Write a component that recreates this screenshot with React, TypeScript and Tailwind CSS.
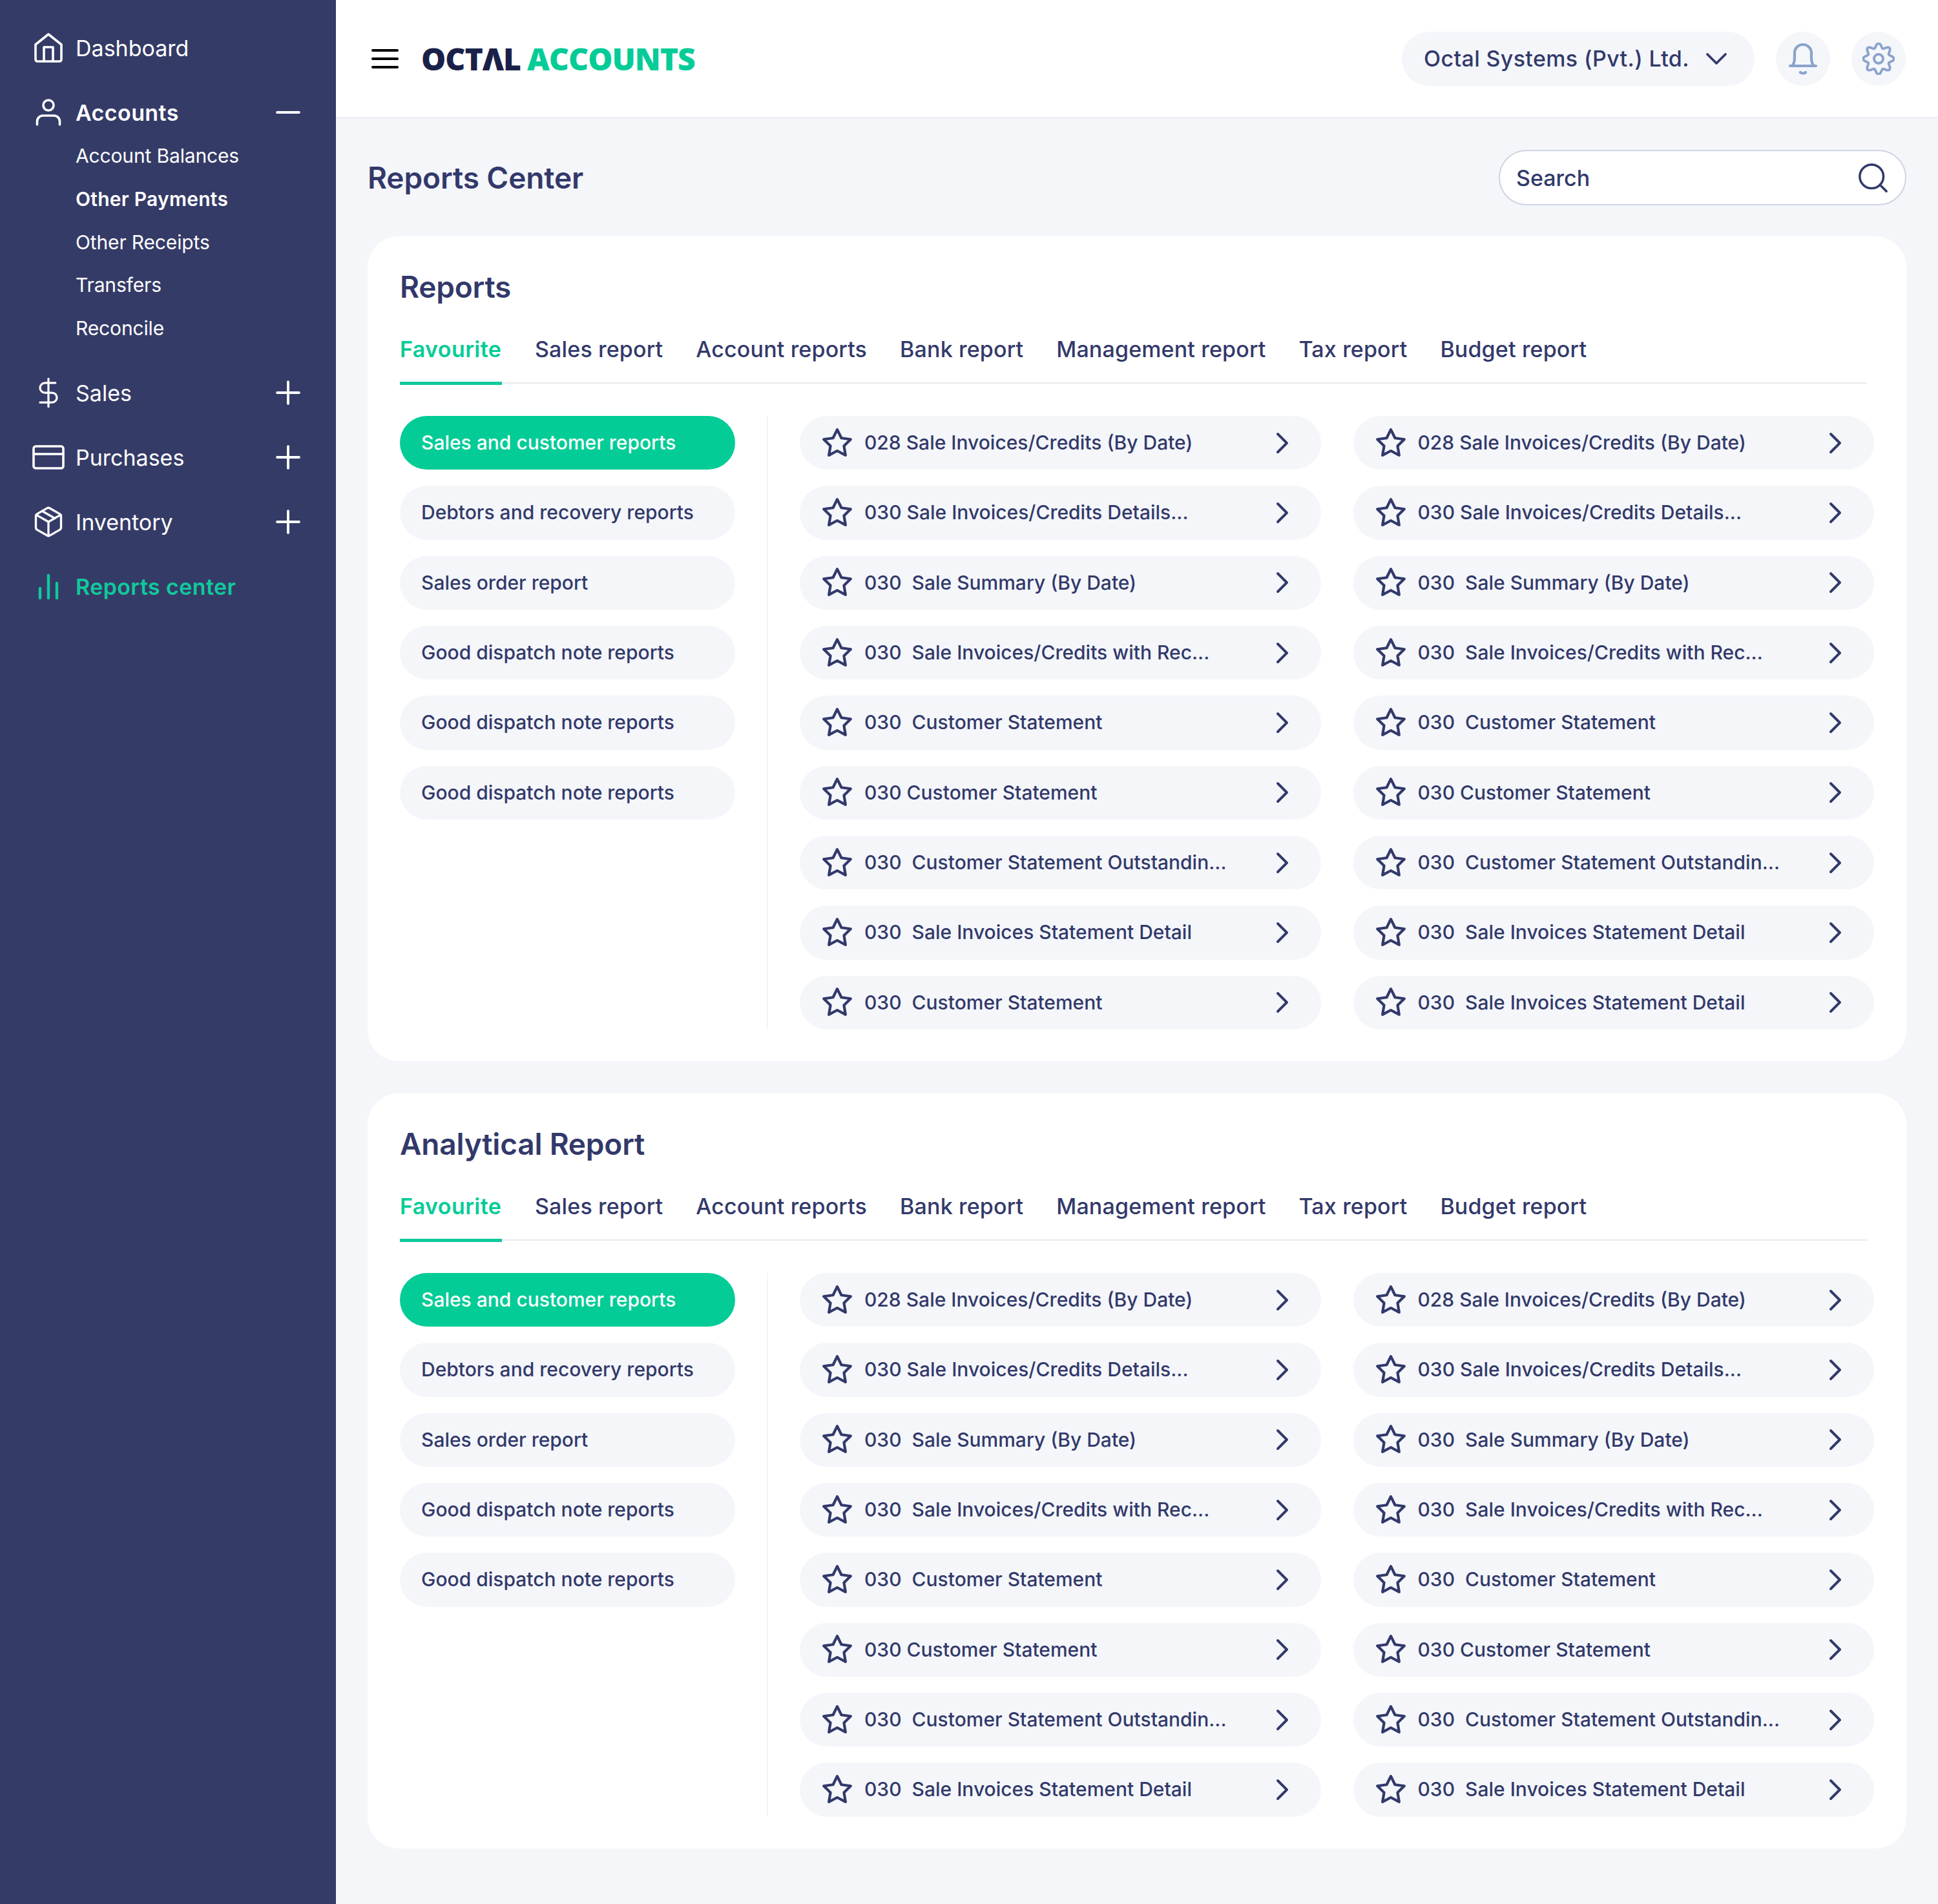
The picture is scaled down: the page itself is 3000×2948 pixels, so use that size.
import { ChevronDown, ChevronRight, DollarSign, Minus, Package, Plus, Search } from "lucide-react";
import type { ReactNode } from "react";

const TABS = ["Sales report", "Account reports", "Bank report", "Management report", "Tax report", "Budget report"];

const CATEGORIES = [
  "Sales and customer reports",
  "Debtors and recovery reports",
  "Sales order report",
  "Good dispatch note reports",
  "Good dispatch note reports",
  "Good dispatch note reports",
];

const REPORTS = [
  "028 Sale Invoices/Credits (By Date)",
  "030 Sale Invoices/Credits Details...",
  "030  Sale Summary (By Date)",
  "030  Sale Invoices/Credits with Rec...",
  "030  Customer Statement",
  "030 Customer Statement",
  "030  Customer Statement Outstandin...",
  "030  Sale Invoices Statement Detail",
];

// wavy circle, 8 lobes
const GEAR_PATH =
  Array.from({ length: 145 }, (_, i) => {
    const a = (i / 144) * Math.PI * 2;
    const r = 20.5 + 3.4 * Math.cos(8 * a);
    return `${i === 0 ? "M" : "L"}${(25 + r * Math.sin(a)).toFixed(2)} ${(25 - r * Math.cos(a)).toFixed(2)}`;
  }).join(" ") + "z";

function StarIcon() {
  return (
    <svg viewBox="0 0 24 24" fill="none" stroke="currentColor" strokeWidth="2" strokeLinejoin="round" className="h-[50px] w-[50px] shrink-0">
      <path d="M12 2l3.09 6.26L22 9.27l-5 4.87 1.18 6.88L12 17.77l-6.18 3.25L7 14.14 2 9.27l6.91-1.01L12 2z" />
    </svg>
  );
}

function HomeIcon() {
  return (
    <svg viewBox="0 0 44 46" fill="none" stroke="currentColor" strokeWidth="3.6" strokeLinejoin="round" className="h-[46px] w-[44px]">
      <path d="M2 18 22 2l20 16v23a3 3 0 0 1-3 3H5a3 3 0 0 1-3-3z" />
      <path d="M15 44V22h14v22" />
    </svg>
  );
}

function UserIcon() {
  return (
    <svg viewBox="0 0 40 42" fill="none" stroke="currentColor" strokeWidth="3.6" strokeLinecap="round" className="h-[42px] w-[40px]">
      <circle cx="20" cy="10" r="8" />
      <path d="M2.5 40v-5a9 9 0 0 1 9-9h17a9 9 0 0 1 9 9v5" />
    </svg>
  );
}

function CardIcon() {
  return (
    <svg viewBox="0 0 50 38" fill="none" stroke="currentColor" strokeWidth="3.6" className="h-[38px] w-[50px]">
      <rect x="2" y="2" width="46" height="34" rx="3.5" />
      <path d="M2 14h46" />
    </svg>
  );
}

function BarsIcon() {
  return (
    <svg viewBox="0 0 34 40" fill="none" stroke="currentColor" strokeWidth="4.4" strokeLinecap="round" className="h-[40px] w-[34px]">
      <path d="M4 38V23M17 38V3M30 38V15" />
    </svg>
  );
}

function BellIcon() {
  return (
    <svg viewBox="0 0 46 50" fill="none" stroke="currentColor" strokeWidth="4.2" strokeLinecap="round" strokeLinejoin="round" className="h-[50px] w-[46px]">
      <path d="M3 36h40" />
      <path d="M6 36c3-3 4-7 4-12v-8a13 13 0 0 1 26 0v8c0 5 1 9 4 12" />
      <path d="M19 46c2 2 6 2 8 0" />
    </svg>
  );
}

function GearIcon() {
  return (
    <svg viewBox="0 0 50 50" fill="none" stroke="currentColor" strokeWidth="3.8" strokeLinejoin="round" className="h-[50px] w-[50px]">
      <path d={GEAR_PATH} />
      <circle cx="25" cy="25" r="7" />
    </svg>
  );
}

function NavRow({ icon, label, action, active, bold }: { icon: ReactNode; label: string; action?: ReactNode; active?: boolean; bold?: boolean }) {
  return (
    <div className={`flex h-[50px] items-center pl-[49px] pr-[45px] text-[34px] ${active ? "text-[#10c99c]" : "text-white"} ${bold ? "font-semibold tracking-[0.4px]" : "font-normal"}`}>
      <span className="flex w-[52px] shrink-0 items-center justify-center">{icon}</span>
      <span className="ml-[16px] flex-1 whitespace-nowrap">{label}</span>
      {action}
    </div>
  );
}

function Sidebar() {
  return (
    <aside className="flex w-[520px] shrink-0 flex-col bg-[#353b67] pt-[49px]">
      <NavRow icon={<HomeIcon />} label="Dashboard" />
      <div className="mt-[50px]">
        <NavRow icon={<UserIcon />} label="Accounts" bold action={<Minus size={58} strokeWidth={1.6} />} />
      </div>
      <div className="mt-[22px] flex flex-col gap-[26.8px] pl-[117px] text-[30px] tracking-[-0.15px] text-white">
        <div className="h-[40px] leading-[40px]">Account Balances</div>
        <div className="h-[40px] font-semibold leading-[40px] tracking-[0.25px]">Other Payments</div>
        <div className="h-[40px] leading-[40px]">Other Receipts</div>
        <div className="h-[40px] leading-[40px]">Transfers</div>
        <div className="h-[40px] leading-[40px]">Reconcile</div>
      </div>
      <div className="mt-[55px] flex flex-col gap-[50px]">
        <NavRow icon={<DollarSign size={58} strokeWidth={1.5} />} label="Sales" action={<Plus size={58} strokeWidth={1.6} />} />
        <NavRow icon={<CardIcon />} label="Purchases" action={<Plus size={58} strokeWidth={1.6} />} />
        <NavRow icon={<Package size={56} strokeWidth={1.55} />} label="Inventory" action={<Plus size={58} strokeWidth={1.6} />} />
        <NavRow icon={<BarsIcon />} label="Reports center" active bold />
      </div>
    </aside>
  );
}

function Header() {
  return (
    <header className="flex h-[183px] items-center border-b-2 border-[#ebeef4] bg-white pl-[55px] pr-[50px]">
      <div className="flex w-[42px] flex-col gap-[9px]">
        <span className="h-[4px] rounded-full bg-black" />
        <span className="h-[4px] rounded-full bg-black" />
        <span className="h-[4px] rounded-full bg-black" />
      </div>
      <div className="ml-[35px] flex-1 whitespace-nowrap font-['Open_Sans',sans-serif] text-[48px] font-extrabold leading-none tracking-[-1px]">
        <span className="text-[#1a2148]">OCTΛL</span>
        <span className="ml-[10px] text-[#05cc97]">ACCOUNTS</span>
      </div>
      <div className="flex h-[84px] w-[546px] items-center justify-between rounded-full bg-[#f4f6fa] pb-[-1px] pl-[34px] pr-[31px] text-[34px] font-medium tracking-[0.35px] text-[#32396a]">
        <span className="whitespace-nowrap">Octal Systems (Pvt.) Ltd.</span>
        <ChevronDown size={56} strokeWidth={1.6} />
      </div>
      <div className="ml-[33px] flex h-[84px] w-[84px] items-center justify-center rounded-full bg-[#f4f6fa] text-[#8aa3cc]">
        <BellIcon />
      </div>
      <div className="ml-[33px] flex h-[84px] w-[84px] items-center justify-center rounded-full bg-[#f4f6fa] text-[#8aa3cc]">
        <GearIcon />
      </div>
    </header>
  );
}

function ReportRow({ label }: { label: string }) {
  return (
    <div className="flex h-[83.33px] items-center rounded-full bg-[#f4f6fa] pl-[33px] pr-[32px] text-[#32396a]">
      <StarIcon />
      <span className="ml-[17px] flex-1 whitespace-pre text-[30px] font-medium">{label}</span>
      <ChevronRight size={56} strokeWidth={1.7} />
    </div>
  );
}

type ReportPair = readonly [string, string];

function ReportCard({ title, categories, reports }: { title: string; categories: string[]; reports: ReportPair[] }) {
  return (
    <section className="rounded-[48px] bg-white pb-[49px] pl-[50px] pr-[50px] pt-[46px]">
      <h2 className="text-[46px] font-semibold leading-[64px] tracking-[-0.2px] text-[#32396a]">{title}</h2>
      <div className="mr-[11px] mt-[34px] flex h-[84px] gap-[51px] border-b-2 border-[#e6e9ef] text-[34px] font-medium tracking-[0.15px] text-[#32396a]">
        <div className="-mb-[2px] flex h-[86px] w-[158px] items-start border-b-[5px] border-[#10c99c] pt-[5px] font-semibold tracking-[0.4px] text-[#05cc97]">Favourite</div>
        {TABS.map((tab) => (
          <div key={tab} className="whitespace-nowrap pt-[5px]">{tab}</div>
        ))}
      </div>
      <div className="mt-[50px] flex">
        <div className="flex w-[519px] shrink-0 flex-col gap-[25px]">
          {categories.map((category, index) => (
            <div
              key={`${category}-${index}`}
              className={`flex h-[83.33px] items-center rounded-full pl-[33px] text-[30px] font-medium ${index === 0 ? "bg-[#03cc96] text-white" : "bg-[#f4f6fa] text-[#32396a]"}`}
            >
              {category}
            </div>
          ))}
        </div>
        <div className="ml-[49px] mr-[49px] w-[2px] shrink-0 bg-[#f2f4f8]" />
        <div className="grid flex-1 grid-cols-2 gap-x-[50px] gap-y-[25px]">
          {reports.flatMap((pair, index) => [
            <ReportRow key={`a-${index}`} label={pair[0]} />,
            <ReportRow key={`b-${index}`} label={pair[1]} />,
          ])}
        </div>
      </div>
    </section>
  );
}

const SAME_ROWS: ReportPair[] = REPORTS.map((report) => [report, report]);

export default function App() {
  return (
    <div className="flex min-h-[2948px] w-full bg-[#f4f6fa] font-['Inter',sans-serif]">
      <Sidebar />
      <main className="flex min-w-0 flex-1 flex-col">
        <Header />
        <div className="px-[49px] pt-[49px]">
          <div className="flex items-center justify-between">
            <h1 className="text-[46px] font-semibold tracking-[-0.1px] text-[#32396a]">Reports Center</h1>
            <div className="flex h-[86px] w-[631px] items-center justify-between rounded-full border-2 border-[#cdd4e2] bg-white pl-[25px] pr-[22px] text-[34px] font-medium text-[#32396a]">
              <span>Search</span>
              <Search size={55} strokeWidth={1.55} />
            </div>
          </div>
          <div className="mt-[48px] flex flex-col gap-[50px]">
            <ReportCard
              title="Reports"
              categories={CATEGORIES}
              reports={[...SAME_ROWS, ["030  Customer Statement", "030  Sale Invoices Statement Detail"]]}
            />
            <ReportCard title="Analytical Report" categories={CATEGORIES.slice(0, 5)} reports={SAME_ROWS} />
          </div>
        </div>
      </main>
    </div>
  );
}
